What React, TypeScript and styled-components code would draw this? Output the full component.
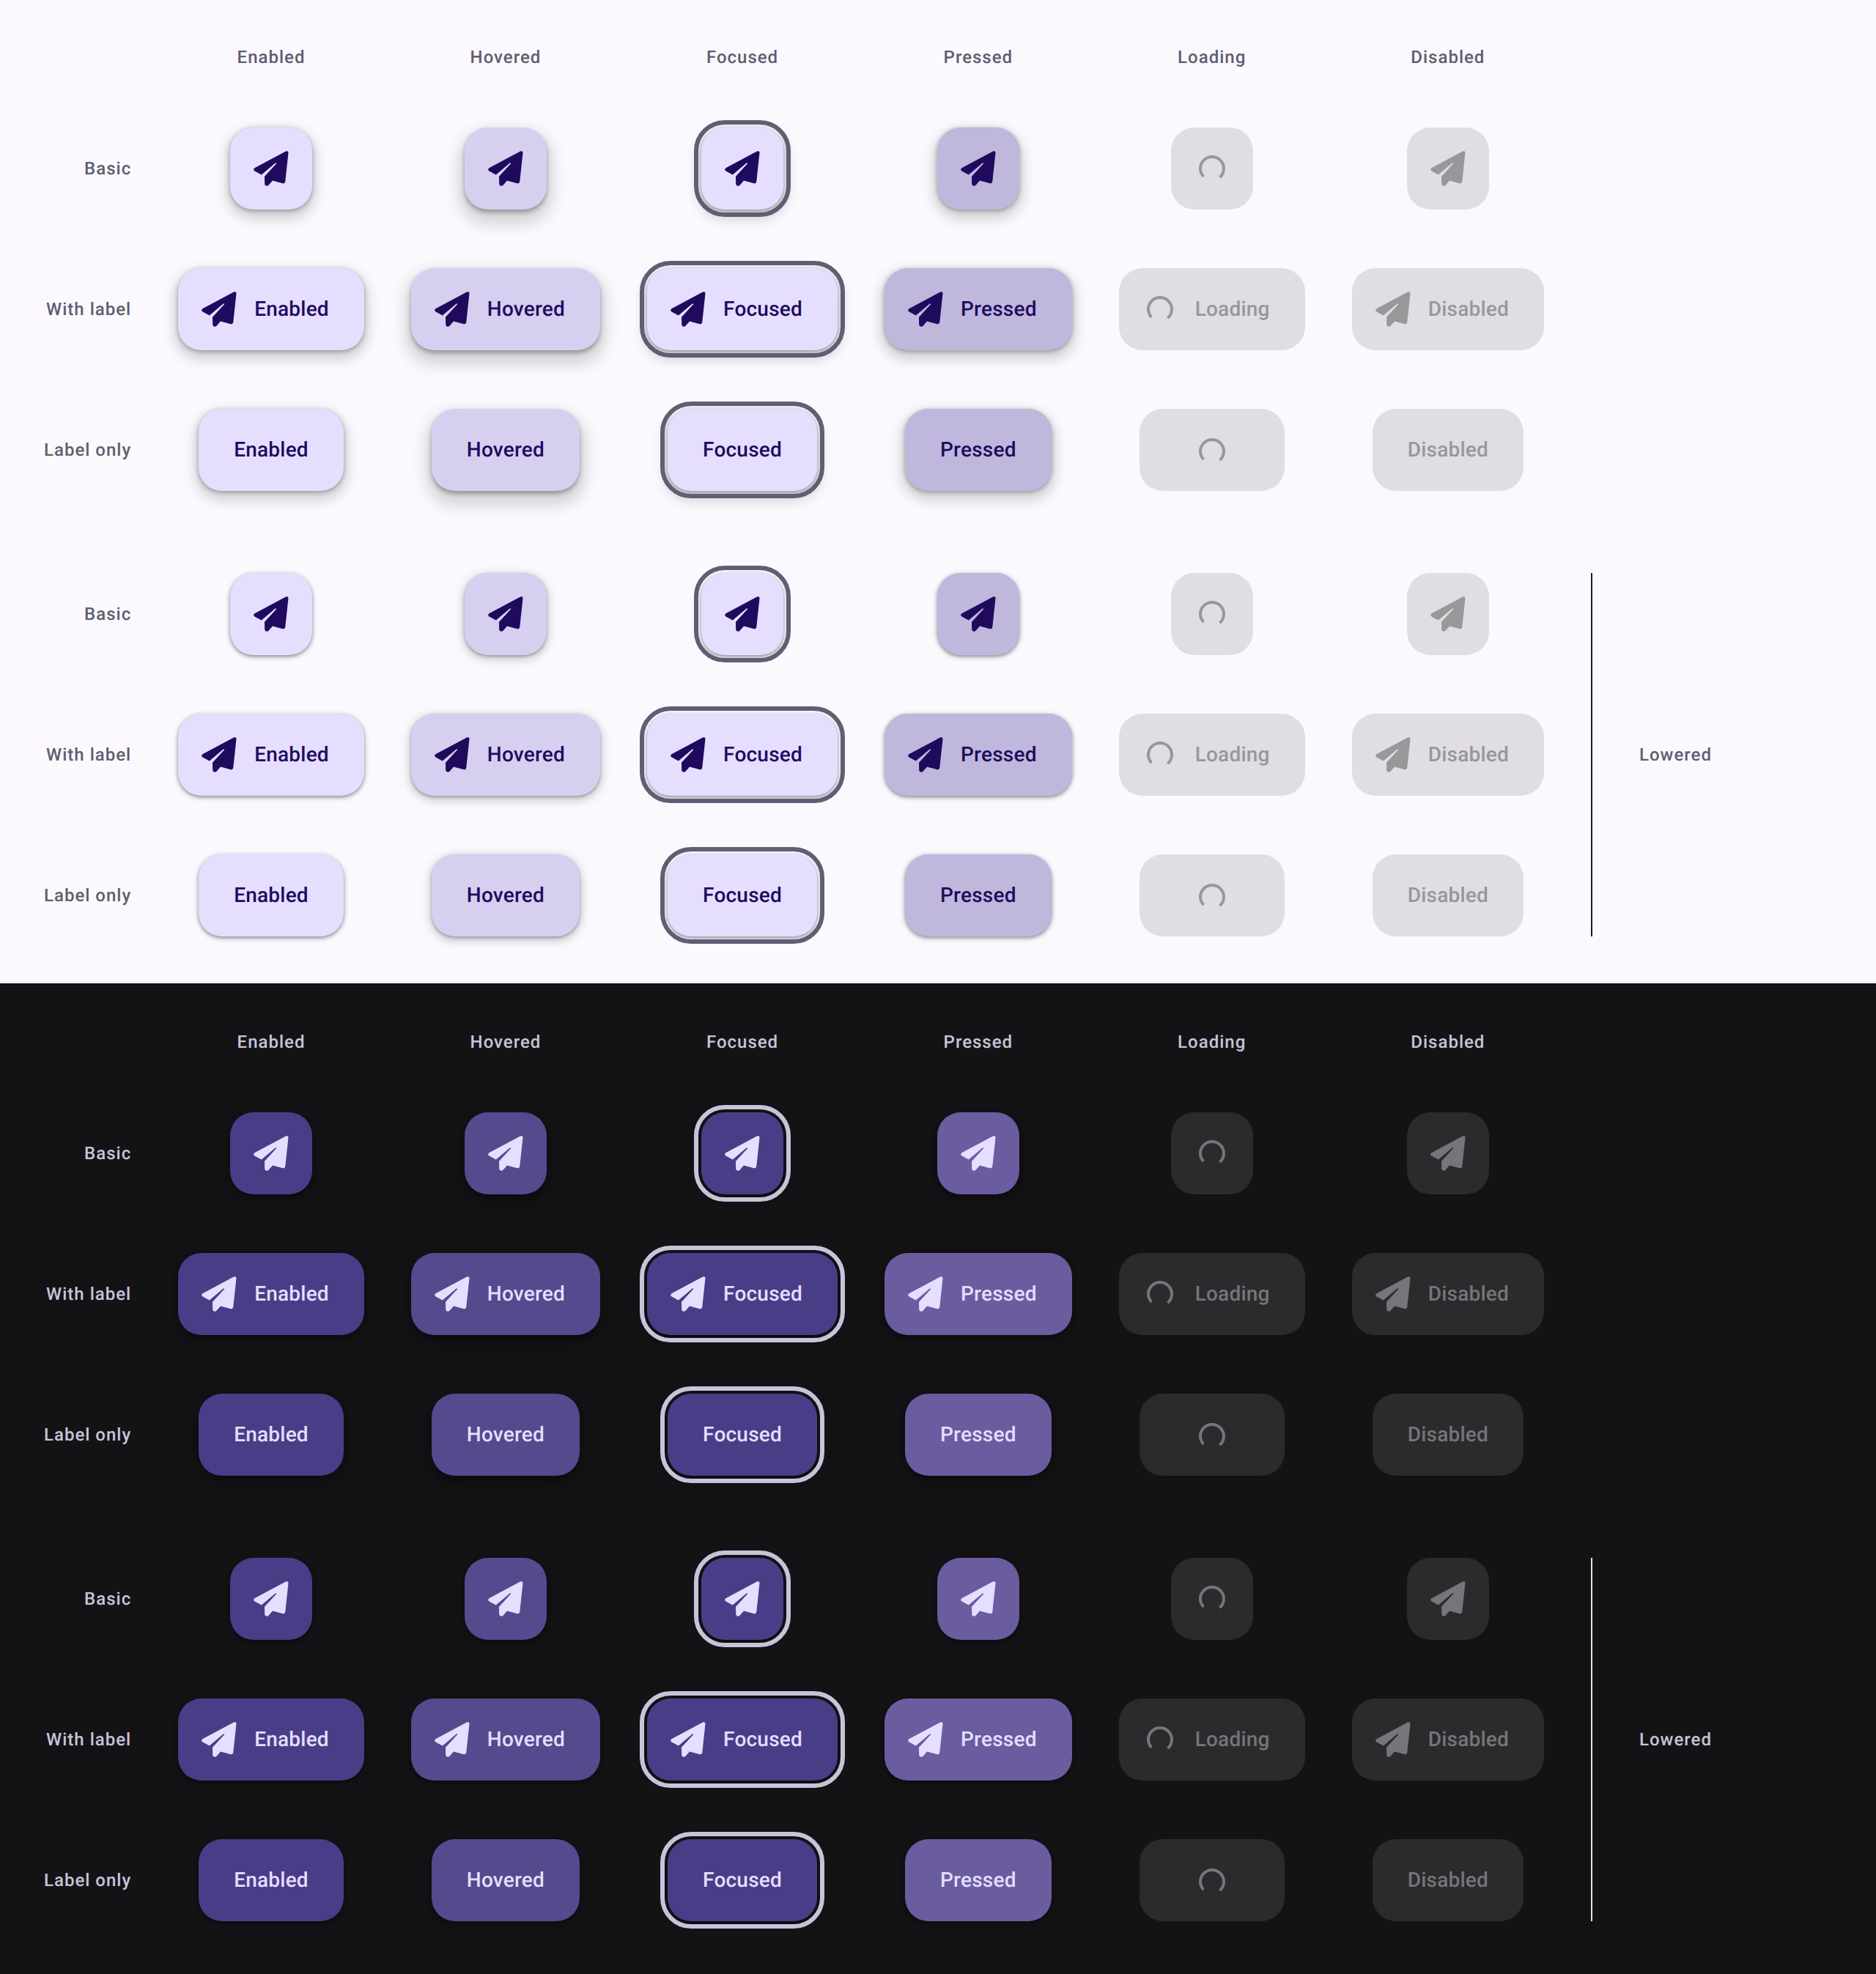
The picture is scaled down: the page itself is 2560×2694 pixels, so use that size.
import React from 'react';
import styled, { createGlobalStyle, css } from 'styled-components';

const Global = createGlobalStyle`
  html, body { margin: 0; padding: 0; }
  body {
    font-family: Roboto, "Liberation Sans", sans-serif;
    text-rendering: geometricPrecision;
  }
`;

type Mode = 'light' | 'dark';
type State = 'Enabled' | 'Hovered' | 'Focused' | 'Pressed' | 'Loading' | 'Disabled';
type Kind = 'Basic' | 'With label' | 'Label only';

const palette = {
  light: {
    surface: '#fbf9fd', muted: '#605d72', fg: '#1f0a5e', ring: '#625d75', divider: '#1c1b20',
    disabledBg: '#e0dee3', disabledFg: '#98979a',
    Enabled: '#e5deff', Hovered: '#d7cff0', Focused: '#e5deff', Pressed: '#bfb7dc',
  },
  dark: {
    surface: '#131316', muted: '#c9c4d8', fg: '#e5deff', ring: '#c9c3da', divider: '#e5e1e6',
    disabledBg: '#2b2a2d', disabledFg: '#767579',
    Enabled: '#4a3d87', Hovered: '#544a8d', Focused: '#4a3d87', Pressed: '#6a5c9f',
  },
};

const shadowRaised = '0 8px 16px 6px rgba(0,0,0,.15), 0 2px 6px rgba(0,0,0,.3)';
const shadowRaisedHover = '0 12px 20px 8px rgba(0,0,0,.15), 0 4px 6px rgba(0,0,0,.3)';
const shadowLowered = '0 2px 6px 2px rgba(0,0,0,.15), 0 2px 4px rgba(0,0,0,.3)';
const shadowLoweredHover = '0 4px 12px 4px rgba(0,0,0,.15), 0 2px 4px rgba(0,0,0,.3)';

const Section = styled.section<{ $mode: Mode }>`
  background: ${p => palette[p.$mode].surface};
  padding: ${p => (p.$mode === 'light' ? '62px 0 64px 60px' : '64px 0 72px 60px')};
`;

const Grid = styled.div`
  display: grid;
  grid-template-columns: repeat(9, auto);
  justify-content: start;
  column-gap: 64px;
  row-gap: 80px;
  align-items: center;
`;

const Caption = styled.div<{ $mode: Mode }>`
  font-size: 24px;
  line-height: 32px;
  font-weight: 500;
  letter-spacing: 1px;
  color: ${p => palette[p.$mode].muted};
  white-space: nowrap;
`;

const ColumnTitle = styled(Caption)<{ $col: number }>`
  grid-row: 1;
  grid-column: ${p => p.$col};
  text-align: center;
`;

const RowTitle = styled(Caption)<{ $row: number; $gapped: boolean }>`
  grid-row: ${p => p.$row};
  grid-column: 1;
  text-align: right;
  ${p => p.$gapped && css`margin-top: 32px;`}
`;

const Slot = styled.div<{ $row: number; $col: number; $gapped: boolean }>`
  grid-row: ${p => p.$row};
  grid-column: ${p => p.$col};
  display: flex;
  justify-content: center;
  ${p => p.$gapped && css`margin-top: 32px;`}
`;

const Divider = styled.div<{ $mode: Mode }>`
  grid-row: 5 / span 3;
  grid-column: 8;
  align-self: stretch;
  width: 2px;
  margin-top: 32px;
  background: ${p => palette[p.$mode].divider};
`;

const SideTitle = styled(Caption)`
  grid-row: 5 / span 3;
  grid-column: 9;
  margin-top: 32px;
`;

const Button = styled.div<{ $mode: Mode; $state: State; $kind: Kind; $lowered: boolean }>`
  position: relative;
  box-sizing: border-box;
  height: 112px;
  display: inline-flex;
  align-items: center;
  gap: 24px;
  border-radius: 32px;
  font-size: 28px;
  line-height: 40px;
  font-weight: 500;
  letter-spacing: 0.22px;
  white-space: nowrap;
  ${p => p.$kind === 'Basic' && css`width: 112px; justify-content: center;`}
  ${p => p.$kind === 'With label' && css`padding: 0 48px 0 32px;`}
  ${p => p.$kind === 'Label only' && css`padding: 0 48px;`}
  ${p => {
    const c = palette[p.$mode];
    if (p.$state === 'Loading' || p.$state === 'Disabled') {
      return css`background: ${c.disabledBg}; color: ${c.disabledFg};`;
    }
    const shadow = p.$state === 'Hovered'
      ? (p.$lowered ? shadowLoweredHover : shadowRaisedHover)
      : (p.$lowered ? shadowLowered : shadowRaised);
    return css`
      background: ${c[p.$state]};
      color: ${c.fg};
      box-shadow: ${shadow};
      ${p.$state === 'Focused' && css`outline: 6px solid ${c.ring}; outline-offset: 4px;`}
    `;
  }}
`;

const Label = styled.span<{ $hidden?: boolean }>`
  ${p => p.$hidden && css`visibility: hidden;`}
`;

const IconBox = styled.svg`
  display: block;
  width: 48px;
  height: 48px;
  flex: none;
`;

const OverlaySpinner = styled.span`
  position: absolute;
  inset: 4px 0 0;
  display: flex;
  align-items: center;
  justify-content: center;
`;

const Plane = () => (
  <IconBox viewBox="0 0 48 48" aria-hidden>
    <path
      fill="currentColor"
      d="M47.5 2.5 43.3 41.5C43 43.8 41 45 39 44L26 40.5 20.5 46.8C18.5 48.8 15.2 47.5 15.2 44.8L15 34.8 31.4 17 30 16.2 10.8 32.6 1.6 27.6C-.2 26.6-.2 24.2 1.4 23.2L44 .6C45.9-.4 47.7.6 47.5 2.5Z"
    />
  </IconBox>
);

const Spinner = () => (
  <IconBox viewBox="0 0 48 48" aria-hidden>
    <path
      fill="none"
      stroke="currentColor"
      strokeWidth="4"
      d="M12.4 35A16 16 0 1 1 34.4 36.1"
    />
  </IconBox>
);

const states: State[] = ['Enabled', 'Hovered', 'Focused', 'Pressed', 'Loading', 'Disabled'];
const kinds: Kind[] = ['Basic', 'With label', 'Label only'];

const Cell = ({ mode, state, kind, lowered }: { mode: Mode; state: State; kind: Kind; lowered: boolean }) => {
  const loading = state === 'Loading';
  return (
    <Button $mode={mode} $state={state} $kind={kind} $lowered={lowered}>
      {kind === 'Basic' && (loading ? <Spinner /> : <Plane />)}
      {kind === 'With label' && (
        <>
          {loading ? <Spinner /> : <Plane />}
          <Label>{state}</Label>
        </>
      )}
      {kind === 'Label only' && (
        <>
          <Label $hidden={loading}>{state}</Label>
          {loading && (
            <OverlaySpinner>
              <Spinner />
            </OverlaySpinner>
          )}
        </>
      )}
    </Button>
  );
};

const Panel = ({ mode }: { mode: Mode }) => (
  <Section $mode={mode}>
    <Grid>
      {states.map((s, i) => (
        <ColumnTitle key={s} $mode={mode} $col={i + 2}>{s}</ColumnTitle>
      ))}
      {[false, true].map(lowered =>
        kinds.map((kind, k) => {
          const row = (lowered ? 5 : 2) + k;
          const gapped = lowered && k === 0;
          return (
            <React.Fragment key={`${lowered}-${kind}`}>
              <RowTitle $mode={mode} $row={row} $gapped={gapped}>{kind}</RowTitle>
              {states.map((state, i) => (
                <Slot key={state} $row={row} $col={i + 2} $gapped={gapped}>
                  <Cell mode={mode} state={state} kind={kind} lowered={lowered} />
                </Slot>
              ))}
            </React.Fragment>
          );
        })
      )}
      <Divider $mode={mode} />
      <SideTitle $mode={mode}>Lowered</SideTitle>
    </Grid>
  </Section>
);

export default function App() {
  return (
    <>
      <Global />
      <Panel mode="light" />
      <Panel mode="dark" />
    </>
  );
}
